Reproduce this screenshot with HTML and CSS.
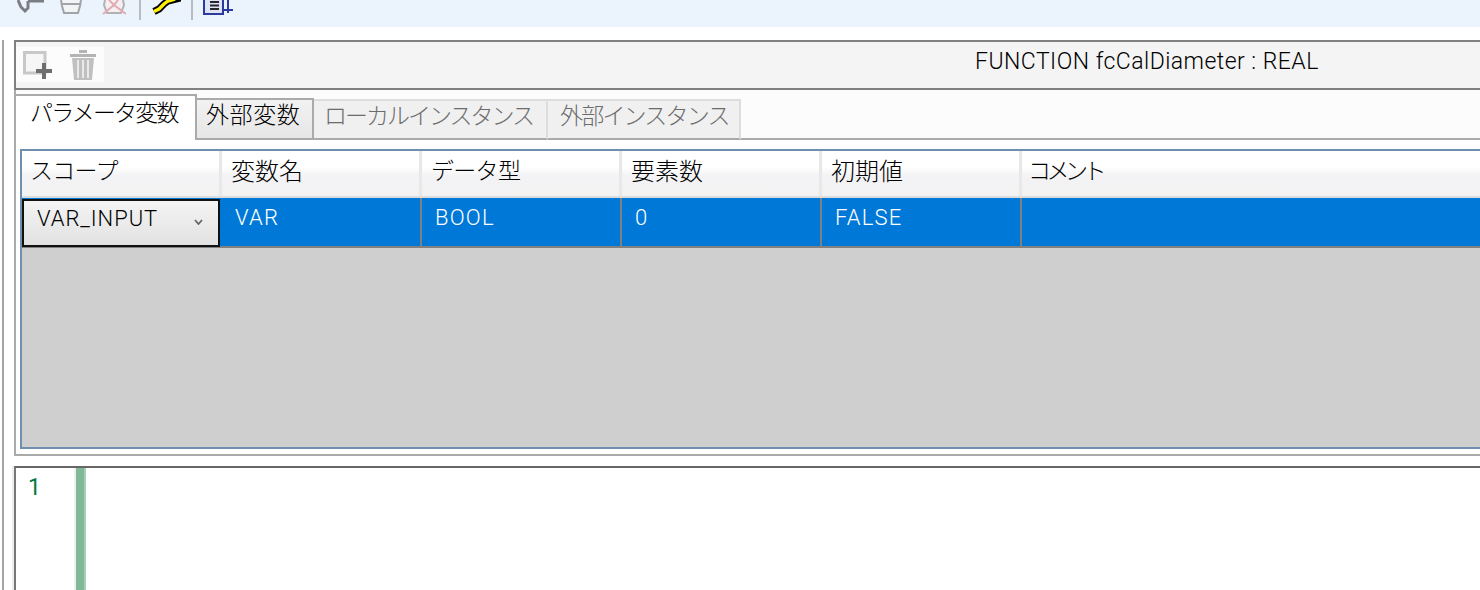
FILE: index.html
```html
<!DOCTYPE html>
<html lang="ja">
<head>
<meta charset="utf-8">
<title>fcCalDiameter</title>
<link rel="stylesheet" href="styles.css">
</head>
<body>
<div class="app">
  <header class="topbar">
    <svg class="ti ti-undo" viewBox="0 0 27 16"><path d="M1 0 L4 7 L8 11 L11 8 V1 M11 1 H27" fill="none" stroke="#7a7e84" stroke-width="3"/></svg>
    <svg class="ti ti-hand" viewBox="0 0 22 16"><path d="M1 0 L2 6 L4 13 H18 L20 6 L21 0 M2 4 H20" fill="#f1f3f5" stroke="#a0a4a8" stroke-width="2"/></svg>
    <svg class="ti ti-del" viewBox="0 0 24 16"><path d="M3 0 L2 5 L5 13 H19 L22 5 L21 0" fill="#f4f0f2" stroke="#b4b0b4" stroke-width="2"/><path d="M1 14 L12 5 L16 0 M7 0 L12 5 L24 14" fill="none" stroke="#e4aab0" stroke-width="2"/></svg>
    <span class="sep sep-a"></span>
    <svg class="ti ti-key" viewBox="0 0 30 16"><path d="M3 11.5 L8 9 L13 4 L17 1 L30 -2" fill="none" stroke="#000" stroke-width="7"/><path d="M3 11.5 L8 9 L13 4 L17 1 L24 -1" fill="none" stroke="#fff000" stroke-width="3.4"/></svg>
    <span class="sep sep-b"></span>
    <svg class="ti ti-list" viewBox="0 0 30 16"><path d="M1 -2 V14 H20 V-2" fill="#dfe3f4" stroke="#2b3a9c" stroke-width="2"/><path d="M7 2 H16 M7 5.5 H16 M7 9 H16" stroke="#26262e" stroke-width="2"/><path d="M25 0 V13 M21 10 H30" stroke="#2b3a9c" stroke-width="2"/></svg>
  </header>
  <div class="main">
    <div class="rail"></div>
    <div class="content">
      <section class="infobar">
        <div class="tools">
          <svg class="tool" viewBox="0 0 30 32"><path d="M1.5 3.5 H22 V24 H1.5 Z" fill="#f6f6f6" stroke="#c8c8c8" stroke-width="3"/><path d="M21 14 V30 M13 22 H29" stroke="#6e6e6e" stroke-width="4"/></svg>
          <svg class="tool" viewBox="0 0 30 32"><path d="M11 1 H19 V4 H11 Z M2 5 H28 V8 H2 Z" fill="#b4b4b4"/><path d="M4 9 H26 L24 31 H6 Z" fill="#c0c0c0"/><path d="M10 11 V29 M15 11 V29 M20 11 V29" stroke="#e9e9e9" stroke-width="2"/></svg>
        </div>
        <div class="signature">FUNCTION fcCalDiameter : REAL</div>
      </section>
      <section class="tabpanel">
        <nav class="tabs">
          <div class="tab tab-active">パラメータ変数</div>
          <div class="tab tab-normal">外部変数</div>
          <div class="tab tab-off tab-local">ローカルインスタンス</div>
          <div class="tab tab-off tab-ext">外部インスタンス</div>
          <div class="tab-rest"></div>
        </nav>
        <div class="gridwrap">
          <div class="grid">
            <div class="row-head">
              <div class="hcell">スコープ</div>
              <div class="hcell hcell-kanji">変数名</div>
              <div class="hcell">データ型</div>
              <div class="hcell hcell-kanji">要素数</div>
              <div class="hcell hcell-kanji">初期値</div>
              <div class="hcell hcell-tight">コメント</div>
            </div>
            <div class="row-data">
              <div class="combo"><span>VAR_INPUT</span>
                <svg class="chev" viewBox="0 0 9 6"><path d="M1 1 L4.5 5 L8 1" fill="none" stroke="#666" stroke-width="1.8"/></svg>
              </div>
              <div class="dcell">VAR</div>
              <div class="dcell">BOOL</div>
              <div class="dcell">0</div>
              <div class="dcell">FALSE</div>
              <div class="dcell dcell-last"></div>
            </div>
          </div>
        </div>
      </section>
      <section class="editor">
        <div class="linenos">1</div>
        <div class="gutter"></div>
        <div class="code"></div>
      </section>
    </div>
  </div>
</div>
</body>
</html>
```

FILE: styles.css
```css
* { box-sizing: border-box; }
html, body { margin: 0; padding: 0; height: 590px; overflow: hidden; background: #fff; }
body { font-family: Roboto, "Liberation Sans", "Noto Sans CJK JP", sans-serif; font-weight: 300; color: #000; }
.app { width: 1480px; height: 590px; display: flex; flex-direction: column; overflow: hidden; }

.topbar { height: 27px; flex: none; background: #ebf3fc; display: flex; align-items: flex-start; overflow: hidden; padding-left: 17px; }
.ti { display: block; height: 16px; flex: none; filter: blur(0.4px); }
.ti-undo { width: 27px; }
.ti-hand { width: 22px; margin-left: 16px; }
.ti-del { width: 24px; margin-left: 20px; }
.ti-key { width: 30px; }
.ti-list { width: 30px; }
.sep { width: 2px; height: 20px; background: #b8bcc0; flex: none; }
.sep-a { margin: 0 10px 0 13px; }
.sep-b { margin: 0 10px 0 10px; }

.main { flex: 1; display: flex; min-height: 0; padding-top: 13px; }
.rail { width: 2px; margin-left: 2px; background: #a4a4a4; flex: none; }
.content { margin-left: 10px; width: 1466px; display: flex; flex-direction: column; }

.infobar { height: 50px; flex: none; border: 2px solid #808080; border-right: 0; background: #f4f4f4; display: flex; }
.tools { width: 88px; height: 35px; margin-top: 5px; background: #fcfcfc; display: flex; align-items: center; gap: 15px; padding-left: 7px; flex: none; }
.tool { display: block; width: 30px; height: 32px; flex: none; filter: blur(0.4px); }
.signature { margin-left: 871px; font-size: 23px; line-height: 40px; white-space: nowrap; letter-spacing: 0.47px; }

.tabpanel { height: 366px; flex: none; border-left: 2px solid #aaa; border-bottom: 2px solid #aaa; background: #fff; display: flex; flex-direction: column; }
.tabs { height: 50px; flex: none; display: flex; align-items: flex-end; background: #fcfcfc; }
.tab { font-size: 23px; font-weight: 300; white-space: nowrap; font-family: "Noto Sans CJK JP", sans-serif; flex: none; }
.tab-active { width: 181px; height: 46px; border-top: 2px solid #aaa; border-right: 2px solid #aaa; background: #fff; padding-left: 14px; line-height: 30px; letter-spacing: -1.8px; }
.tab-normal { width: 117px; height: 42px; background: linear-gradient(#f2f2f2, #e6e6e6); border: 2px solid #aaa; border-left: 0; padding-left: 9px; line-height: 27px; letter-spacing: 0.6px; }
.tab-off { height: 41px; background: #f0f0f0; color: #6c6c6c; border-top: 2px solid #ddd; border-right: 2px solid #ddd; border-bottom: 2px solid #aaa; line-height: 26px; padding-left: 10px; letter-spacing: -2px; }
.tab-local { width: 234px; }
.tab-ext { width: 193px; padding-left: 12px; letter-spacing: -1.8px; }
.tab-rest { flex: 1; height: 2px; background: #aaa; }

.gridwrap { flex: 1; min-height: 0; padding: 9px 0 5px 4px; display: flex; background: #fff; }
.grid { flex: 1; border: 2px solid #6f8fb0; border-right: 0; background: #cfcfcf; }
.row-head { height: 47px; display: grid; grid-template-columns: repeat(5, 200px) 1fr; background: linear-gradient(#fff 0%, #fff 35%, #f3f3f5 55%, #f2f2f3 100%); border-bottom: 2px solid #dcdcdc; }
.hcell { font-family: "Noto Sans CJK JP", sans-serif; font-size: 23px; font-weight: 300; line-height: 37px; padding-left: 9px; border-right: 3px solid #e8e8e8; letter-spacing: -0.7px; }
.hcell-kanji { font-size: 24px; letter-spacing: 0; }
.hcell-tight { letter-spacing: -4.5px; border-right: 0; padding-left: 6px; }
.hcell:first-child { padding-left: 8px; }
.row-data { height: 50px; display: grid; grid-template-columns: repeat(5, 200px) 1fr; background: #0078d7; border-bottom: 2px solid #808080; }
.dcell { color: #fff; font-size: 22px; line-height: 40px; padding-left: 13px; border-right: 2px solid #808080; letter-spacing: 1.2px; }
.dcell-last { border-right: 0; }
.combo { margin-right: 2px; margin-top: 1px; height: 48px; border: 2px solid #111; background: linear-gradient(#f4f4f4, #e2e2e2); font-size: 22px; line-height: 36px; padding-left: 13px; display: flex; align-items: flex-start; letter-spacing: 0.95px; }
.chev { display: block; width: 9px; height: 6px; margin: 18px 15px 0 auto; flex: none; }

.editor { flex: 1; min-height: 0; margin-top: 10px; display: flex; border-top: 2px solid #666; border-left: 2px solid #777; box-shadow: -2px 0 0 #eee; }
.linenos { width: 60px; flex: none; color: #007a45; font-size: 23px; font-weight: 400; line-height: 40px; padding-left: 12px; background: #fff; }
.gutter { width: 10px; flex: none; background: linear-gradient(90deg, #82b898 0, #82b898 8px, #a6d0b4 8px); box-shadow: -2px 0 0 #f0f0f0; }
.code { flex: 1; background: #fff; }
```
